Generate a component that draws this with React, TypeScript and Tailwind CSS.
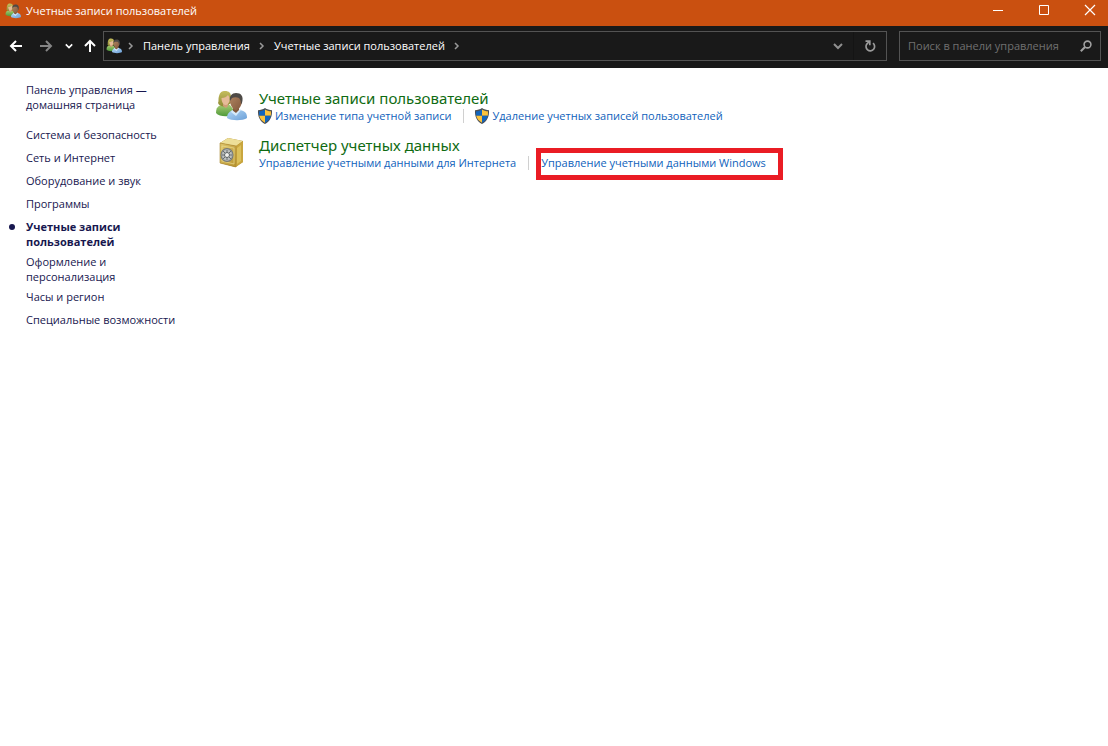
import React from 'react';

interface IconProps {
  className?: string;
}

const UsersIcon: React.FC<IconProps> = ({ className }) => (
  <svg className={className} viewBox="0 0 32 32" aria-hidden="true">
    <defs>
      <linearGradient id="green-shirt" x1="0" y1="0" x2="0" y2="1">
        <stop offset="0" stopColor="#a5c972" />
        <stop offset="1" stopColor="#4f9a3a" />
      </linearGradient>
      <linearGradient id="blue-shirt" x1="0" y1="0" x2="1" y2="1">
        <stop offset="0" stopColor="#b5d8f5" />
        <stop offset="1" stopColor="#6a9fd8" />
      </linearGradient>
      <linearGradient id="hair" x1="0" y1="0" x2="0" y2="1">
        <stop offset="0" stopColor="#c5bd5c" />
        <stop offset="1" stopColor="#8f8a35" />
      </linearGradient>
      <linearGradient id="dark-face" x1="0" y1="0" x2="1" y2="1">
        <stop offset="0" stopColor="#b08562" />
        <stop offset="1" stopColor="#82583c" />
      </linearGradient>
    </defs>
    <path d="M1 23c0-5 2-8 7-8h7l3 4v6c-5 2-14 2-17-2z" fill="url(#green-shirt)" />
    <path d="M3 13c1-2 0-4 1-7 1-4 3-5 6-5 4 0 6 2 6 6v6l-4 3c-4 1-8 0-9-3z" fill="url(#hair)" />
    <path d="M8 13h5v3l-2 2-3-2z" fill="#cf9c78" />
    <path d="M6.500 8c3 0 5-1 6.500-3 1.500 2 2 4 1.500 6-.5 2-2 4-4 4s-4-3-4-7z" fill="#e6bb98" />
    <path d="M12 28c0-4 2-7 7-8h6c5 1 7 3 7 8-4 3-16 3-20 0z" fill="url(#blue-shirt)" />
    <path d="M18 18h6v3c-1 2-4 3-6 1z" fill="#80583a" />
    <path d="m17 20 4 3 4-4 1 1-5 6-5-4z" fill="#d5eafb" />
    <path d="M15 11c0-3 3-6 6-6s6 3 6 6c0 4-3 9-6 9s-6-5-6-9z" fill="url(#dark-face)" />
    <path d="M15 11c-1-5 2-8 6-8 5 0 8 3 6 10l-1 1c0-3-1-5-2-6-2-1-5-1-7 0z" fill="#4e4a46" />
  </svg>
);

const SafeIcon: React.FC<IconProps> = ({ className }) => (
  <svg className={className} viewBox="0 0 32 32" aria-hidden="true">
    <defs>
      <linearGradient id="safe-front" x1="0" y1="0" x2="1" y2="1">
        <stop offset="0" stopColor="#dfc66c" />
        <stop offset="1" stopColor="#b8942f" />
      </linearGradient>
      <radialGradient id="safe-dial">
        <stop offset="0" stopColor="#f4f4f2" />
        <stop offset="1" stopColor="#a4a8a8" />
      </radialGradient>
    </defs>
    <path d="m5 6 8-5 15 3v21l-8 5L5 26z" fill="#a98127" />
    <path d="m5 6 8-5 15 3-7 5z" fill="#eddf98" />
    <path d="m21 9 7-5v21l-7 5z" fill="#c9a63e" />
    <path d="m22 11 4-3v16l-4 3z" fill="#dcc05a" />
    <path d="m5 6 16 3v21L5 26z" fill="url(#safe-front)" stroke="#a98630" strokeWidth="0.6" />
    <path d="m7 9 12 2v16L7 24z" fill="none" stroke="#efe09a" strokeWidth="0.6" />
    <ellipse cx="12" cy="18" rx="6.500" ry="7" fill="#74797a" />
    <ellipse cx="12" cy="18" rx="5.500" ry="6" fill="url(#safe-dial)" />
    <path d="M12 13v10M7 18h10M8 14l8 8M16 14l-8 8" stroke="#686e70" strokeWidth="1" />
    <circle cx="12" cy="18" r="2.500" fill="#f0f0ee" stroke="#5c6264" />
  </svg>
);

const ShieldIcon: React.FC<IconProps> = ({ className }) => (
  <svg className={className} viewBox="0 0 16 16" aria-hidden="true">
    <path d="M8 0c2 1.400 4.500 2.200 7 2.200C15.400 8.500 13 13.500 8 16 3 13.500.6 8.500 1 2.200 3.500 2.200 6 1.400 8 0z" fill="#4a4f55" />
    <path d="M8 1.400v6.400H2.200C2 6.300 2 4.800 2.100 3.300 4.300 3.200 6.300 2.600 8 1.400z" fill="#1265bd" />
    <path d="M8 1.400c1.700 1.200 3.700 1.800 5.900 1.900.1 1.500.1 3-.1 4.500H8z" fill="#fbc33c" />
    <path d="M2.200 7.800H8v7C4.700 13 2.800 10.800 2.200 7.800z" fill="#fbc33c" />
    <path d="M8 7.800h5.800c-.6 3-2.500 5.200-5.800 7z" fill="#1265bd" />
  </svg>
);

const ArrowIcon: React.FC<IconProps> = ({ className }) => (
  <svg className={className} viewBox="0 0 14 14" fill="none" stroke="currentColor" strokeWidth="2" aria-hidden="true">
    <path d="M13 7H2M7 2 2 7l5 5" />
  </svg>
);

const ChevronIcon: React.FC<IconProps> = ({ className }) => (
  <svg className={className} viewBox="0 0 10 10" fill="none" stroke="currentColor" strokeWidth="2" aria-hidden="true">
    <path d="m1 3 4 4 4-4" />
  </svg>
);

const CrumbArrow: React.FC = () => (
  <svg className="w-[6px] h-[8px] shrink-0 text-[#999999]" viewBox="0 0 6 8" fill="none" stroke="currentColor" strokeWidth="1.500" aria-hidden="true">
    <path d="m1 1 3 3-3 3" />
  </svg>
);

const categories = [
  { label: 'Система и безопасность' },
  { label: 'Сеть и Интернет' },
  { label: 'Оборудование и звук' },
  { label: 'Программы' },
  { label: 'Учетные записи пользователей', current: true, wraps: true },
  { label: 'Оформление и персонализация', wraps: true },
  { label: 'Часы и регион' },
  { label: 'Специальные возможности' },
];

const TitleBar: React.FC = () => (
  <header className="flex h-[26px] items-center bg-[#ca5010] pl-[5px] text-white">
    <UsersIcon className="mb-1 size-4 shrink-0" />
    <h1 className="ml-[5px] mb-1 flex-1 text-[11px] leading-4">Учетные записи пользователей</h1>
    <div className="mb-[6px] flex gap-[34px] pr-3">
      <button type="button" aria-label="Свернуть">
        <svg className="size-[12px]" viewBox="0 0 12 12" stroke="currentColor"><path d="M1 6.500h10" /></svg>
      </button>
      <button type="button" aria-label="Развернуть">
        <svg className="size-[12px]" viewBox="0 0 12 12" fill="none" stroke="currentColor"><path d="M1.500 1.500h9v9h-9z" /></svg>
      </button>
      <button type="button" aria-label="Закрыть">
        <svg className="size-[12px]" viewBox="0 0 12 12" stroke="currentColor" strokeWidth="1.200"><path d="m1 1 10 10M11 1 1 11" /></svg>
      </button>
    </div>
  </header>
);

const NavBar: React.FC = () => (
  <nav className="flex h-[42px] items-center bg-[#191919] pr-[7px] pb-[2px] text-[11px] text-white">
    <div className="flex w-[103px] shrink-0 items-center pl-[9px]">
      <button type="button" aria-label="Назад"><ArrowIcon className="size-[14px]" /></button>
      <button type="button" aria-label="Вперед" className="ml-4 text-[#858585]"><ArrowIcon className="size-[14px] rotate-180" /></button>
      <button type="button" aria-label="Последние" className="ml-3"><ChevronIcon className="size-[8px]" /></button>
      <button type="button" aria-label="Вверх" className="ml-[10px]"><ArrowIcon className="size-[14px] rotate-90" /></button>
    </div>
    <div className="flex h-[30px] min-w-0 flex-1 items-center border border-[#535353] pl-[2px]">
      <UsersIcon className="size-4 shrink-0" />
      <div className="flex flex-1 items-center gap-[9px] pl-[6px]">
        <CrumbArrow />
        <a href="#" className="whitespace-nowrap">Панель управления</a>
        <CrumbArrow />
        <a href="#" className="whitespace-nowrap">Учетные записи пользователей</a>
        <CrumbArrow />
      </div>
      <button type="button" aria-label="Показать путь" className="flex h-full w-[30px] items-center justify-center text-[#8f8f8f]">
        <ChevronIcon className="size-[10px]" />
      </button>
      <button type="button" aria-label="Обновить" className="flex h-full w-[33px] items-center justify-center border-l border-[#141414] text-[#9a9a9a]">
        <svg className="size-[14px]" viewBox="0 0 14 14" fill="none" stroke="currentColor" strokeWidth="1.700">
          <path d="M10 4.200A4.300 4.300 0 1 1 4 4.800L6.200 2.500" />
          <path d="M2.500 2.200h4.300v4" />
        </svg>
      </button>
    </div>
    <form role="search" className="ml-3 flex h-[30px] w-[202px] shrink-0 items-center border border-[#535353] pl-2 pr-2">
      <input
        type="text"
        aria-label="Поиск в панели управления"
        placeholder="Поиск в панели управления"
        className="min-w-0 flex-1 bg-transparent outline-none placeholder:text-[#707070]"
      />
      <button type="button" aria-label="Найти" className="text-[#a0a0a0]">
        <svg className="size-[12px]" viewBox="0 0 12 12" fill="none" stroke="currentColor" strokeWidth="1.600">
          <circle cx="7.500" cy="4.500" r="3.400" />
          <path d="M5 7 .8 11.200" strokeWidth="2" />
        </svg>
      </button>
    </form>
  </nav>
);

const Sidebar: React.FC = () => (
  <aside className="w-[215px] shrink-0 pl-[26px] pt-[14px] text-[11px] leading-[15px] text-[#17174f]">
    <a href="#" className="mb-[15px] block w-[140px]">Панель управления — домашняя страница</a>
    <ul>
      {categories.map(item => (
        <li key={item.label} className={item.wraps ? 'relative w-[120px] pb-[5px]' : 'whitespace-nowrap pb-2'}>
          {item.current && <span className="absolute -left-[17px] top-[5px] size-[6px] rounded-full bg-[#17174f]" />}
          <a href="#" className={item.current ? 'font-bold' : ''}>{item.label}</a>
        </li>
      ))}
    </ul>
  </aside>
);

const App: React.FC = () => (
  <div className="min-h-screen bg-white font-['Open_Sans','Noto_Sans',sans-serif]">
    <TitleBar />
    <NavBar />
    <div className="flex">
      <Sidebar />
      <main className="flex-1 pt-5 text-[11px] leading-4 text-[#0f62bb]">
        <section className="flex h-[47px]">
          <UsersIcon className="mt-[2px] mr-3 size-8 shrink-0" />
          <div>
            <h2 className="font-['Noto_Sans',sans-serif] text-[15px] leading-5 text-[#0f6b12]"><a href="#">Учетные записи пользователей</a></h2>
            <div className="flex items-center whitespace-nowrap">
              <ShieldIcon className="-ml-[2px] mr-[2px] size-4" />
              <a href="#">Изменение типа учетной записи</a>
              <span className="mx-3 h-[14px] w-px bg-[#d0d0d0]" />
              <ShieldIcon className="-ml-[2px] mr-[2px] size-4" />
              <a href="#">Удаление учетных записей пользователей</a>
            </div>
          </div>
        </section>
        <section className="flex h-[47px]">
          <SafeIcon className="mt-[2px] mr-3 size-8 shrink-0" />
          <div>
            <h2 className="font-['Noto_Sans',sans-serif] text-[15px] leading-5 text-[#0f6b12]"><a href="#">Диспетчер учетных данных</a></h2>
            <div className="flex items-center whitespace-nowrap">
              <a href="#">Управление учетными данными для Интернета</a>
              <span className="mx-3 h-[14px] w-px bg-[#d0d0d0]" />
              <a href="#" className="relative">
                Управление учетными данными Windows
                <span className="absolute -top-[7px] -bottom-[9px] -left-[5px] -right-[17px] border-[5px] border-[#ea1c24]" />
              </a>
            </div>
          </div>
        </section>
      </main>
    </div>
  </div>
);

export default App;
